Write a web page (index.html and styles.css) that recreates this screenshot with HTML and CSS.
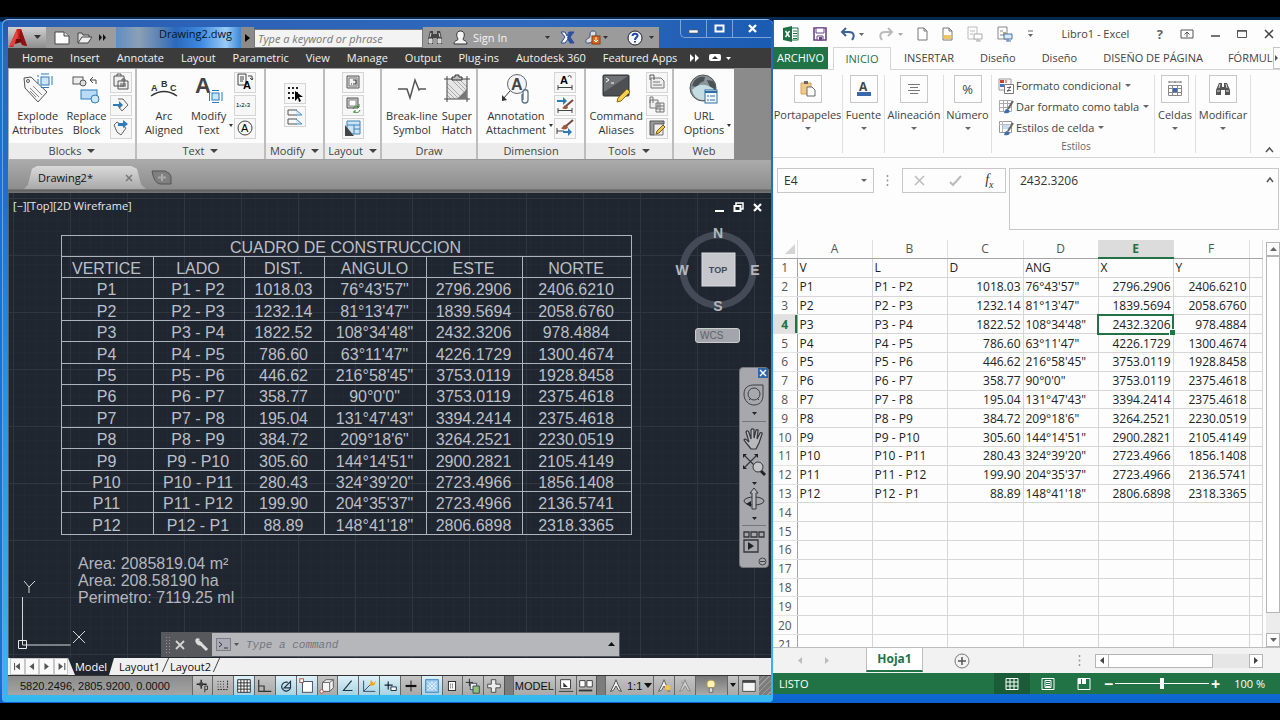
FILE: index.html
```html
<!DOCTYPE html>
<html lang="es">
<head>
<meta charset="utf-8">
<title>Drawing2.dwg / Libro1 - Excel</title>
<link rel="stylesheet" href="styles.css">
</head>
<body>
<div class="desktop">

<section class="cad" aria-label="Drawing2.dwg">
  <header class="cad-title">
    <button class="app-btn" aria-label="Application menu">
      <svg width="19" height="20" viewBox="0 0 19 20"><path d="M0 19 8 1h4l6 17-5-1-2-4-5 2-2 4z" fill="#c3211c"/><path d="M8 1 0 19l5-2 4-9z" fill="#e2443a"/><path d="M12 1l6 17-5-1-3-9z" fill="#8d1411"/><path d="M7 11h5l1 3-7 2z" fill="#6b0d0b"/></svg>
      <svg width="8" height="5" viewBox="0 0 8 5"><path d="M0 0h7L3.500 4z" fill="#333"/></svg>
    </button>
    <div class="qat">
      <button aria-label="New"><svg width="18" height="16" viewBox="0 0 18 16"><path d="M2 2h9l5 4v8H2z" fill="#fff" stroke="#444"/><path d="M11 2v4h5" fill="#ddd" stroke="#444"/></svg></button>
      <button aria-label="Open"><svg width="18" height="16" viewBox="0 0 18 16"><path d="M2 13V3h4l1 2h6v3" fill="#ddd" stroke="#444"/><path d="M2 13l4-6h10l-4 6z" fill="#eee" stroke="#444"/></svg></button>
      <button aria-label="More"><svg width="8" height="7" viewBox="0 0 8 7"><path d="M0 0l3 3.500L0 7zM4 0l3 3.500L4 7z" fill="#111"/></svg></button>
    </div>
    <h1 class="cad-name">Drawing2.dwg</h1>
    <button class="name-arrow" aria-label="Expand"><svg width="5" height="8" viewBox="0 0 5 8"><path d="M0 0l5 4-5 4z" fill="#000"/></svg></button>
    <input class="cad-search" type="text" placeholder="Type a keyword or phrase" aria-label="Search">
    <div class="info">
      <button aria-label="Find"><svg width="16" height="15" viewBox="0 0 16 15"><path d="M3 1h3v3h4V1h3l2 8v5h-5V8H6v6H1V9z" fill="#444"/><path d="M2 9h3v4H2zM11 9h3v4h-3zM4 3l-1 4M12 3l1 4" fill="#ccc" stroke="#ddd"/></svg></button>
      <button class="sign"><svg width="15" height="15" viewBox="0 0 15 15"><path d="M5 9C3 6 3 1 7.500 1S12 6 10 9c0 2 4 1 4 5H1c0-4 4-3 4-5z" fill="#f4f4f4" stroke="#333"/></svg><span>Sign In</span></button>
      <svg class="push" width="5" height="3" viewBox="0 0 5 3"><path d="M0 0h5L2.500 3z" fill="#333"/></svg>
      <button aria-label="Exchange"><svg width="15" height="13" viewBox="0 0 15 13"><path d="M1 1h4l2 4 2-4h5l-4 5 4 6h-4l-2-4-3 4H1l4-6z" fill="#fff" stroke="#274a97"/><path d="M9 1h5l-4 5 4 6h-4L7 7z" fill="#2c4f9e"/></svg></button>
      <button aria-label="Stay connected"><svg width="24" height="15" viewBox="0 0 24 15"><path d="M1 12C0 8 5 9 5 6S5 1 8 1s4 2 2 5-3 7-6 7-3 0-3-1z" fill="#ddd" stroke="#365488"/><rect x="7" y="6" width="8" height="8" fill="#d96a1d" stroke="#8c3d06"/><path d="M11 7v5M9 10l2 2 2-2" stroke="#fff" fill="none"/><path d="M18 6h5l-2.500 3z" fill="#333"/></svg></button>
      <button class="help" aria-label="Help"><svg width="28" height="16" viewBox="0 0 28 16"><circle cx="8" cy="8" r="7" fill="#f5f7ff" stroke="#222"/><path d="M5.500 6c0-3 5-3 5-.3C10.500 7.500 8 7.500 8 10m0 1v1.500" fill="none" stroke="#2344a0" stroke-width="2"/><path d="M22 6h5l-2.500 3z" fill="#333"/></svg></button>
    </div>
    <div class="win-ctl">
      <button aria-label="Minimize"><svg width="12" height="12" viewBox="0 0 12 12"><path d="M1 7h9v3H1z" fill="#fff" stroke="#555" stroke-width=".6"/></svg></button>
      <button aria-label="Maximize"><svg width="12" height="10" viewBox="0 0 12 10"><path d="M1.500 1.500h8v6h-8z" fill="none" stroke="#fff" stroke-width="2"/></svg></button>
      <button aria-label="Close"><svg width="11" height="9" viewBox="0 0 11 9"><path d="M2 1l7 7M9 1L2 8" stroke="#fff" stroke-width="2.400"/></svg></button>
    </div>
  </header>

  <nav class="cad-menu">
    <button>Home</button><button>Insert</button><button>Annotate</button><button>Layout</button><button>Parametric</button><button>View</button><button>Manage</button><button>Output</button><button>Plug-ins</button><button>Autodesk 360</button><button>Featured Apps</button>
    <svg width="42" height="10" viewBox="0 0 42 10"><path d="M1 1l4 4-4 4zM6 1l4 4-4 4z" fill="#fff"/><rect x="20" y="1" width="12" height="7" rx="2" fill="#fff"/><path d="M23 6l3-3 3 3z" fill="#333"/><path d="M37 4h5l-2.500 3z" fill="#fff"/></svg>
  </nav>

  <div class="ribbon">
    <div class="panel w-blocks"><div class="tools">
      <button class="big"><svg width="32" height="30" viewBox="0 0 32 30"><path d="M2 4l7-1 16 15-9 10L3 14z" fill="#f7f7f7" stroke="#555"/><circle cx="6" cy="7" r="1.500" fill="none" stroke="#555"/><path d="M8 14l9 9M11 12l9 9M8 17l6 6" stroke="#888"/><rect x="19" y="3" width="8" height="8" fill="#cde4f7" stroke="#2f7ab8"/><path d="M16 1v2M16 5v5M30 2v9M19 0h8M19 13.500h8" stroke="#2f7ab8" fill="none"/></svg><span>Explode<br>Attributes</span></button>
      <button class="big"><svg width="30" height="30" viewBox="0 0 30 30"><rect x="2" y="3" width="10" height="7" fill="#eee" stroke="#555"/><circle cx="12" cy="9" r="3" fill="#ddd" stroke="#555"/><path d="M25 10V6h-6m3-3l-3 3 3 3" fill="none" stroke="#444"/><rect x="10" y="16" width="16" height="9" fill="#b9dbf5" stroke="#2f7ab8"/><circle cx="24" cy="25" r="4" fill="#cde6f8" stroke="#2f7ab8"/></svg><span>Replace<br>Block</span></button>
      <div class="smalls">
        <button aria-label="Paste"><svg viewBox="0 0 18 18"><path d="M2 3h10v10H2zM5 3V1h4v2M6 8h10v8H6zM8 11h6M8 13h6M10 8v-2h3v2" fill="#eee" stroke="#555"/></svg></button>
        <button aria-label="Export"><svg viewBox="0 0 18 18"><path d="M6 3h5l5 6-6 6-4-5" fill="#f3f3f3" stroke="#666"/><path d="M1 8h6V5l4 4-4 4v-3H1z" fill="#2f7ab8"/></svg></button>
        <button aria-label="Import"><svg viewBox="0 0 18 18"><path d="M2 6l3-3 9 6-5 7-4-3z" fill="#f3f3f3" stroke="#666"/><path d="M6 4h5V1l5 4-5 4V7H6z" fill="#2f7ab8"/></svg></button>
      </div></div><button class="cap">Blocks <i></i></button></div>
    <div class="panel w-text"><div class="tools">
      <button class="big"><svg width="30" height="30" viewBox="0 0 30 30"><text x="2" y="17" class="g9">A</text><text x="12" y="13" class="g9">B</text><text x="21" y="17" class="g9">C</text><path d="M2 22q13-9 26 0" fill="none" stroke="#333" stroke-width="1.500"/></svg><span>Arc<br>Aligned</span></button>
      <button class="big drop"><svg width="30" height="30" viewBox="0 0 30 30"><text x="1" y="19" class="g22">A</text><rect x="18" y="19" width="7" height="7" fill="#cde4f7" stroke="#2f7ab8"/><path d="M15.500 18v9M28 18v9M18 16.500h7M18 28.500h7" stroke="#2f7ab8"/></svg><span>Modify<br>Text</span></button>
      <div class="smalls">
        <button aria-label="Convert text"><svg viewBox="0 0 18 18"><path d="M2 1h8v11H2zM4 4h4M4 6h4M4 8h3M12 3h4v4m-2-2l2 2 1-2" fill="none" stroke="#444"/><text x="7" y="16" class="g11 bold">A</text></svg></button>
        <button aria-label="Numbering"><svg viewBox="0 0 18 18"><text x="0" y="11" class="g6">1›2›3</text></svg></button>
        <button aria-label="Enclose text"><svg viewBox="0 0 18 18"><circle cx="9" cy="9" r="7" fill="none" stroke="#444"/><text x="5" y="13" class="g11">A</text></svg></button>
      </div></div><button class="cap">Text <i></i></button></div>
    <div class="panel w-modify"><div class="tools">
      <div class="smalls">
        <button aria-label="Select"><svg viewBox="0 0 18 18"><path d="M2 3h12M2 8h12M2 13h7" stroke="#222" stroke-width="2" stroke-dasharray="2 2"/><path d="M9 6v10l3-3 1 4 2-1-2-4h4z" fill="#000"/></svg></button>
        <button aria-label="Clip"><svg viewBox="0 0 18 18"><path d="M11 2H2v5h9M11 11H2v5h9" fill="none" stroke="#555"/><path d="M10 2l6 5h-6M10 11l6 5h-6" fill="#d8eafa" stroke="#4a8dc8"/></svg></button>
      </div></div><button class="cap">Modify <i></i></button></div>
    <div class="panel w-layout"><div class="tools">
      <div class="smalls">
        <button aria-label="Align space"><svg viewBox="0 0 18 18"><path d="M3 3h12v12H3z" fill="#ddd" stroke="#555"/><path d="M5 5h8v8H5z" fill="#f2f2f2" stroke="#777"/><path d="M7 11h1M9 11h3V7H9" fill="none" stroke="#333"/></svg></button>
        <button aria-label="Synchronize viewports"><svg viewBox="0 0 18 18"><path d="M3 2h11v10H3z" fill="#ccc" stroke="#555"/><path d="M5 4h7v6H5z" fill="#fff" stroke="#888"/><path d="M9 13c1-3 4-3 6-2m1 3c-1 3-4 3-6 2M15 8v3h-2M10 17v-2h2" fill="none" stroke="#35862c"/></svg></button>
        <button aria-label="Merge layouts"><svg viewBox="0 0 18 18"><path d="M3 2h13v13H3z" fill="#cde4f7" stroke="#3e82b9"/><path d="M3 6h13M10 6v9M10 10h6" stroke="#3e82b9"/><path d="M1 6v11h9z" fill="#444"/></svg></button>
      </div></div><button class="cap">Layout <i></i></button></div>
    <div class="panel w-draw"><div class="tools">
      <button class="big"><svg width="30" height="30" viewBox="0 0 30 30"><path d="M1 15h9l3 9 5-18 4 10 1-1h6" fill="none" stroke="#555" stroke-width="1.500"/></svg><span>Break-line<br>Symbol</span></button>
      <button class="big"><svg width="30" height="30" viewBox="0 0 30 30"><rect x="5" y="5" width="20" height="20" fill="#e6e6e6"/><path d="M5 9l16 16M5 13l12 12M5 17l8 8M9 5l16 16M13 5l12 12M17 5l8 8M5 21l4 4" stroke="#999" stroke-width=".8"/><path d="M2 5h26M2 25h26M5 2v26M25 2v26" stroke="#444"/><path d="M25 15v10H15z" fill="#777"/><path d="M10 6V3h3V1h4v2h3v3z" fill="#bbb" stroke="#333"/></svg><span>Super<br>Hatch</span></button>
      </div><div class="cap">Draw</div></div>
    <div class="panel w-dim"><div class="tools">
      <button class="big drop"><svg width="32" height="30" viewBox="0 0 32 30"><circle cx="17" cy="10" r="9.500" fill="#f1f5f9" stroke="#666"/><text x="11" y="16" class="g16">A</text><path d="M10 17L3 25" stroke="#333"/><path d="M2 27v-6l5 5z" fill="#333"/><path d="M23 26v-8c0-3 5-3 5 0v8c0 4-6 4-6 0v-6" fill="none" stroke="#5c7489" stroke-width="1.300"/></svg><span>Annotation<br>Attachment</span></button>
      <div class="smalls">
        <button aria-label="Reset text"><svg viewBox="0 0 18 18"><text x="4" y="11" class="g11 bold">A</text><path d="M2 12v5M16 12v5M2 14.500h14M12 4c0-2 4-2 3 1" fill="none" stroke="#444"/></svg></button>
        <button aria-label="Apply style"><svg viewBox="0 0 18 18"><path d="M1 4h6V1l4 4-4 4V6H1z" fill="#2f7ab8"/><path d="M17 4l-7 6" stroke="#744" stroke-width="2"/><path d="M6 12c2 0 1-3 4-3l2 2c0 3-5 2-6 1z" fill="#9b5a3e"/><path d="M2 12v5M16 12v5M2 14.500h14" stroke="#444"/></svg></button>
        <button aria-label="Match style"><svg viewBox="0 0 18 18"><path d="M17 1l-7 6" stroke="#744" stroke-width="2"/><path d="M5 9c2 0 2-4 5-3l2 2c0 3-6 3-7 1z" fill="#9b5a3e"/><path d="M1 9v6M1 12h7" stroke="#444"/><path d="M7 12h5v-3l4 4-4 4v-3H7z" fill="#2f7ab8"/></svg></button>
      </div></div><div class="cap">Dimension</div></div>
    <div class="panel w-tools"><div class="tools">
      <button class="big"><svg width="32" height="30" viewBox="0 0 32 30"><rect x="3" y="1" width="26" height="21" rx="1" fill="#4d4f52" stroke="#333"/><path d="M4 2h24L4 18z" fill="#707376"/><path d="M6 4l3 2-3 2M11 9h3" fill="none" stroke="#fff"/><path d="M17 28l1-4 9-9 3 3-9 9z" fill="#f5d04e" stroke="#8e6c16"/></svg><span>Command<br>Aliases</span></button>
      <div class="smalls">
        <button aria-label="Import aliases"><svg viewBox="0 0 18 18"><path d="M3 5h10l3 3v7H3zM5 9h7M5 12h9" fill="#eee" stroke="#777"/><path d="M2 7V2h4v5" fill="none" stroke="#555"/></svg></button>
        <button aria-label="Export aliases"><svg viewBox="0 0 18 18"><path d="M2 4h8v8H2zM2 7V1h3v6M8 7h8v9H8zM8 10h8M12 7v9M8 13h8" fill="#eee" stroke="#777"/></svg></button>
        <button aria-label="Edit file"><svg viewBox="0 0 18 18"><path d="M2 2h14v3H6v11H2z" fill="#999" stroke="#555"/><path d="M6 5h9v11H6z" fill="#eee" stroke="#777"/><path d="M8 15l1-3 6-6 2 2-6 6z" fill="#f0c84a" stroke="#7c6018"/></svg></button>
      </div></div><button class="cap">Tools <i></i></button></div>
    <div class="panel w-web"><div class="tools">
      <button class="big drop"><svg width="30" height="30" viewBox="0 0 30 30"><circle cx="14" cy="14" r="13" fill="#8b9499" stroke="#555"/><path d="M5 7c3-4 8-5 11-4l-1 4-4 2-3 4-5-1zM18 6l6 1c3 4 3 7 2 9l-5-3z" fill="#4a5256"/><path d="M3 16q9-10 22-1-3 12-12 11-8-1-10-10z" fill="#c3dde3"/><rect x="16" y="16" width="12" height="13" fill="#eef6fd" stroke="#2f6ea3"/><path d="M16 18h12" stroke="#2f6ea3" stroke-width="2"/><path d="M18 22h2M21 22h5M18 26h2M21 26h5" stroke="#2f6ea3"/></svg><span>URL<br>Options</span></button>
      </div><div class="cap">Web</div></div>
  </div>

  <div class="doc-tabs">
    <button class="doc-tab"><span>Drawing2*</span><svg width="8" height="8" viewBox="0 0 8 8"><path d="M1 1l6 6M7 1L1 7" stroke="#777" stroke-width="1.500"/></svg></button>
    <button class="doc-new" aria-label="New drawing"><svg width="22" height="15" viewBox="0 0 22 15"><path d="M1 1h13q6 2 6 6v7H9Q3 13 1 1z" fill="#808080" stroke="#555"/><path d="M11 4v7M7 7.500h8" stroke="#aaa" stroke-width="2"/></svg></button>
  </div>

  <main class="canvas">
    <div class="view-label">[−][Top][2D Wireframe]</div>
    <div class="mdi">
      <button aria-label="Minimize drawing"><svg width="11" height="11" viewBox="0 0 11 11"><path d="M1 8h9v2H1z" fill="#fff"/></svg></button>
      <button aria-label="Restore drawing"><svg width="11" height="11" viewBox="0 0 11 11"><path d="M3 3V1h7v6H8" fill="none" stroke="#fff" stroke-width="1.500"/><path d="M1.500 4h6v5h-6z" fill="none" stroke="#fff" stroke-width="2"/></svg></button>
      <button aria-label="Close drawing"><svg width="11" height="11" viewBox="0 0 11 11"><path d="M2 2l7 7M9 2L2 9" stroke="#fff" stroke-width="2.200"/></svg></button>
    </div>
    <table class="survey">
      <colgroup><col class="c1"><col class="c2"><col class="c3"><col class="c4"><col class="c5"><col class="c6"></colgroup>
      <thead>
        <tr><th colspan="6">CUADRO DE CONSTRUCCION</th></tr>
        <tr><th>VERTICE</th><th>LADO</th><th>DIST.</th><th>ANGULO</th><th>ESTE</th><th>NORTE</th></tr>
      </thead>
      <tbody id="survey"></tbody>
    </table>
    <div class="summary">Area: 2085819.04 m²<br>Area: 208.58190 ha<br>Perimetro: 7119.25 ml</div>
    <svg class="cube" width="90" height="90" viewBox="0 0 90 90"><circle cx="45" cy="45" r="35" fill="none" stroke="#454a57" stroke-width="7"/><rect x="29" y="28" width="33" height="33" fill="#c6c7cc" stroke="#dadbe0"/><text x="45" y="48" class="top">TOP</text><text x="45" y="13" class="dir">N</text><text x="45" y="86" class="dir">S</text><text x="9" y="50" class="dir">W</text><text x="82" y="50" class="dir">E</text></svg>
    <button class="wcs">WCS</button>
    <div class="navbar">
      <button class="nav-x" aria-label="Close navigation bar"><svg width="10" height="10" viewBox="0 0 10 10"><rect width="10" height="10" fill="#2d67a8"/><path d="M2 2l6 6M8 2L2 8" stroke="#fff" stroke-width="1.300"/></svg></button>
      <button aria-label="Steering wheel"><svg width="26" height="37" viewBox="0 0 26 37"><path d="M3 12C3 5 8 3 13 3h9v10c0 7-4 10-9 10S3 19 3 12z" fill="none" stroke="#3c3f45"/><circle cx="13" cy="12" r="6" fill="none" stroke="#3c3f45"/><path d="M8 18l2-2M18 18l-2-2" stroke="#3c3f45"/><path d="M11 30h5l-2.500 3z" fill="#222"/></svg></button>
      <hr>
      <button aria-label="Pan"><svg width="26" height="26" viewBox="0 0 26 26"><path d="M10 23c-2-3-5-6-7-9 1-2 3 0 5 2L5 6c1-2 3-1 3 1l2 6V4c1-2 3-1 3 0v8l2-8c1-1 3 0 2 1l-1 8 3-6c1-1 3 0 2 1l-3 9-3 6z" fill="#b7b9bd" stroke="#33363b" stroke-width="1.200"/></svg></button>
      <button aria-label="Zoom extents"><svg width="26" height="34" viewBox="0 0 26 34"><path d="M4 4l12 12M16 3L4 15" stroke="#33363b" stroke-width="1.200"/><path d="M2 2h4L2 6zM13 2h4v4zM2 13v4h4z" fill="#222"/><circle cx="17" cy="15" r="5" fill="#c3c5c9" stroke="#33363b"/><path d="M20 19l4 4" stroke="#222" stroke-width="3"/><path d="M11 30h5l-2.500 3z" fill="#222"/></svg></button>
      <button aria-label="Orbit"><svg width="26" height="37" viewBox="0 0 26 37"><ellipse cx="13" cy="15" rx="10" ry="4" fill="none" stroke="#33363b"/><path d="M11 23V7H9l4-5 4 5h-2v16z" fill="#b7b9bd" stroke="#33363b"/><path d="M5 18l5-3v6z" fill="#222"/><path d="M11 31h5l-2.500 3z" fill="#222"/></svg></button>
      <hr>
      <button aria-label="ShowMotion"><svg width="26" height="24" viewBox="0 0 26 24"><path d="M3 2h5v5H3zM10 2h6v5h-6zM18 2h5v5h-5zM3 10h14v12H3z" fill="none" stroke="#33363b" stroke-width="1.300"/><path d="M7 12l6 4-6 4z" fill="#222"/></svg></button>
      <svg class="nav-min" width="9" height="9" viewBox="0 0 9 9"><circle cx="4.500" cy="4.500" r="3.500" fill="none" stroke="#444"/><path d="M2 4.500h5" stroke="#444"/></svg>
    </div>
    <svg class="ucs" width="70" height="72" viewBox="0 0 70 72"><path d="M4.500 17v48h48" fill="none" stroke="#d4d6da"/><path d="M.5 60.500h8v8h-8z" fill="none" stroke="#e8e8ea"/><path d="M6 1l5 6 6-6M11 7v6M55 51l12 12M67 51L55 63" fill="none" stroke="#d4d6da"/></svg>
    <div class="cmd">
      <div class="cmd-grip"><svg width="50" height="24" viewBox="0 0 50 24"><path d="M4.500 4v17M7.500 4v17" stroke="#999" stroke-dasharray="1 2"/><path d="M14 8l8 8M22 8l-8 8" stroke="#d5d5d5" stroke-width="1.800"/><path d="M36 8l9 9" stroke="#ddd" stroke-width="3"/><path d="M34 10c-2-4 1-6 4-4l-2 2 1 2 3-1c1 4-3 5-6 1z" fill="#ddd"/></svg></div>
      <svg width="26" height="14" viewBox="0 0 26 14"><rect x=".5" y=".5" width="14" height="12" fill="#a9acb5" stroke="#7b7e86"/><path d="M3 4l3 2.500L3 9M8 10h4" fill="none" stroke="#333"/><path d="M18 5h5l-2.500 3z" fill="#555"/></svg>
      <input type="text" placeholder="Type a command" aria-label="Command line">
      <svg width="8" height="5" viewBox="0 0 8 5"><path d="M0 4h7L3.500 0z" fill="#111"/></svg>
    </div>
  </main>

  <div class="layout-tabs">
    <div class="steps"><button aria-label="First"><svg viewBox="0 0 14 14"><path d="M4 3v8" stroke="#333"/><path d="M10 3v8L5 7z" fill="#555"/></svg></button><button aria-label="Previous"><svg viewBox="0 0 14 14"><path d="M9 3v8L4 7z" fill="#555"/></svg></button><button aria-label="Next"><svg viewBox="0 0 14 14"><path d="M5 3v8l5-4z" fill="#555"/></svg></button><button aria-label="Last"><svg viewBox="0 0 14 14"><path d="M4 3v8l5-4z" fill="#555"/><path d="M11 3v8" stroke="#333"/></svg></button></div>
    <button class="model on">Model</button><button class="lay">Layout1</button><button class="lay">Layout2</button>
  </div>

  <footer class="cad-status">
    <output>5820.2496, 2805.9200, 0.0000</output>
    <button aria-label="Infer constraints"><svg viewBox="0 0 20 20"><path d="M8 3v10M3 8h11" stroke="#222" stroke-width="1.500"/><path d="M6 6h4v4H6z" fill="#444"/><path d="M12 17V10h3v4h-3" fill="none" stroke="#333"/></svg></button>
    <button aria-label="Snap"><svg viewBox="0 0 20 20"><path d="M4 5h9M4 8h9M4 11h9" stroke="#222" stroke-dasharray="1 2"/><path d="M4 14h11M15 4v8" stroke="#222" stroke-dasharray="2 1"/></svg></button>
    <button class="lit" aria-label="Grid"><svg viewBox="0 0 20 20"><path d="M3 3h14v14H3zM3 6.500h14M3 10h14M3 13.500h14M6.500 3v14M10 3v14M13.500 3v14" fill="#fff" stroke="#222"/></svg></button>
    <button aria-label="Ortho"><svg viewBox="0 0 20 20"><path d="M3 3v13h14M3 10h6v6" fill="none" stroke="#333" stroke-width="1.300"/></svg></button>
    <button class="lit" aria-label="Polar"><svg viewBox="0 0 20 20"><path d="M12 6a5 5 0 1 0 3 6H8l7-7v7" fill="none" stroke="#234" stroke-width="1.300"/></svg></button>
    <button class="lit" aria-label="Object snap"><svg viewBox="0 0 20 20"><rect x="5" y="5" width="11" height="12" fill="#fff" stroke="#445"/><rect x="2" y="2" width="4" height="4" fill="#fff" stroke="#b43"/></svg></button>
    <button aria-label="3D object snap"><svg viewBox="0 0 20 20"><path d="M5 6l4-3h8v9l-4 4H5zM5 6h8v10M13 6l4-3" fill="#f5f5f5" stroke="#555"/><circle cx="4" cy="16" r="2" fill="#fff" stroke="#b43"/></svg></button>
    <button class="lit" aria-label="Tracking"><svg viewBox="0 0 20 20"><path d="M14 4L5 15h10" fill="none" stroke="#234" stroke-width="1.300"/></svg></button>
    <button class="lit" aria-label="Dynamic UCS"><svg viewBox="0 0 20 20"><path d="M4 4v12h13M4 16l9-9" fill="none" stroke="#346"/><path d="M12 3l3 4 3-3-2 5-5 1z" fill="#f1a51c"/></svg></button>
    <button class="lit" aria-label="Dynamic input"><svg viewBox="0 0 20 20"><path d="M4 9h9M8 5v9" stroke="#123" stroke-width="1.300"/><path d="M11 11h6v4h-6z" fill="#fff" stroke="#123"/></svg></button>
    <button aria-label="Lineweight"><svg viewBox="0 0 20 20"><path d="M4 10h12" stroke="#111" stroke-width="2.400"/><path d="M10 4v12" stroke="#111"/></svg></button>
    <button class="lit" aria-label="Transparency"><svg viewBox="0 0 20 20"><rect x="3" y="3" width="14" height="14" fill="#9cc9ee" stroke="#3e7fb8"/><path d="M5 5l10 10M9 5l6 6M13 5l2 2M5 9l6 6M5 13l2 2M15 5L5 15M15 9l-6 6M11 5l-6 6" stroke="#eaf5ff"/></svg></button>
    <button aria-label="Quick properties"><svg viewBox="0 0 20 20"><rect x="6" y="5" width="8" height="10" fill="#fff" stroke="#222"/><path d="M8 8h4M8 10h4M8 12h4" stroke="#222" stroke-dasharray="1 1"/></svg></button>
    <button aria-label="Selection cycling"><svg viewBox="0 0 20 20"><path d="M6 2v8M2 6h8" stroke="#222"/><path d="M7 7h7v7H7z" fill="#eee" stroke="#345"/><path d="M10 10h7v8h-7z" fill="#8fc078" stroke="#345"/></svg></button>
    <button aria-label="Annotation monitor"><svg viewBox="0 0 20 20"><path d="M7 3h5v5h5v4h-5v5H7v-5H3V8h4z" fill="#eee" stroke="#444"/></svg></button>
    <span class="sep"></span>
    <button class="txt">MODEL</button>
    <button aria-label="Quick view layouts"><svg viewBox="0 0 20 20"><path d="M4 3h11v10H4zM2 16h16" fill="#fff" stroke="#333"/><path d="M7 6v5h5z" fill="#333"/></svg></button>
    <button aria-label="Quick view drawings"><svg viewBox="0 0 20 20"><path d="M3 4h6v7H3zM11 4h6v7h-6z" fill="#fff" stroke="#333"/><path d="M2 15h15" stroke="#333" stroke-width="2"/></svg></button>
    <span class="sep"></span>
    <button class="scale"><svg viewBox="0 0 20 20"><path d="M10 3l-2 5-4 8 3-1 3-5 3 5 3 1-4-8z" fill="#f3f3f3" stroke="#444"/></svg><span>1:1</span><svg class="tri" viewBox="0 0 8 5"><path d="M0 0h8L4 5z" fill="#111"/></svg></button>
    <button aria-label="Annotation visibility"><svg viewBox="0 0 20 20"><path d="M10 3l-2 5-4 8 3-1 3-5 3 5 3 1-4-8z" fill="#f3f3f3" stroke="#555"/><circle cx="14" cy="12" r="3" fill="#f3c64a"/></svg></button>
    <button aria-label="Auto scale"><svg viewBox="0 0 20 20"><path d="M10 3l-2 5-4 8 3-1 3-5 3 5 3 1-4-8z" fill="#ccc" stroke="#888"/><path d="M5 3l2 3 2-3-2 6z" fill="#999"/></svg></button>
    <button class="bulb" aria-label="Isolate objects"><svg viewBox="0 0 20 20"><circle cx="10" cy="8" r="4.500" fill="#fdf3b4" stroke="#b99a3c"/><path d="M8 12h4v5H8z" fill="#ddd" stroke="#666"/></svg></button>
    <button class="thin" aria-label="Status menu"><svg class="tri" viewBox="0 0 8 5"><path d="M1 0h6L4 4z" fill="#111"/></svg></button>
    <button aria-label="Clean screen"><svg viewBox="0 0 20 20"><path d="M3 4h14v12H3z" fill="#f5f5f5" stroke="#444"/><path d="M3 5h14" stroke="#444" stroke-width="3"/></svg></button>
    <span class="grip"></span>
  </footer>
</section>

<section class="xl" aria-label="Libro1 - Excel">
  <header class="xl-title">
    <svg width="16" height="16" viewBox="0 0 16 16"><path d="M8 2h7v12H8z" fill="#fff" stroke="#1e7145"/><path d="M10 5h4M10 7.500h4M10 10h4M10 12.500h4" stroke="#1e7145"/><path d="M0 2l9-2v16l-9-2z" fill="#1e7145"/><path d="M2.500 5l4 6M6.500 5l-4 6" stroke="#fff" stroke-width="1.400"/></svg>
    <button aria-label="Guardar"><svg width="14" height="14" viewBox="0 0 14 14"><path d="M1 1h12v12H1z" fill="#fff" stroke="#6b4488" stroke-width="1.600"/><path d="M3 1h8v5H3zM4 9h6v4H4z" fill="#fff" stroke="#6b4488"/><path d="M6 10h3v3H6z" fill="#6b4488"/></svg></button>
    <button aria-label="Deshacer"><svg width="24" height="14" viewBox="0 0 24 14"><path d="M5 1L1 5l4 4M1 5h7c5 0 6 4 3 8" fill="none" stroke="#3f6299" stroke-width="2"/><path d="M18 6h5l-2.500 3z" fill="#666"/></svg></button>
    <button aria-label="Rehacer"><svg width="24" height="14" viewBox="0 0 24 14"><path d="M9 1l4 4-4 4M13 5H6C1 5 0 9 3 13" fill="none" stroke="#bbb" stroke-width="2"/><path d="M19 6h5l-2.500 3z" fill="#aaa"/></svg></button>
    <button aria-label="Nuevo"><svg width="11" height="14" viewBox="0 0 11 14"><path d="M1 1h6l3 3v9H1zM7 1v3h3" fill="#fff" stroke="#777"/></svg></button>
    <button aria-label="Abrir"><svg width="11" height="14" viewBox="0 0 11 14"><path d="M1 1h6l3 3v9H1zM7 1v3h3" fill="#fff" stroke="#777"/><path d="M2 8h7v4H2z" fill="#ecc663"/></svg></button>
    <button aria-label="Vista"><svg width="16" height="16" viewBox="0 0 16 16"><path d="M1 1h9v12H1zM3 5h5M3 8h3" fill="none" stroke="#bbb"/><path d="M7 8h8v5H7zM11 13v2M9 15h5" fill="#fff" stroke="#aaa"/></svg></button>
    <button aria-label="Impresión"><svg width="16" height="16" viewBox="0 0 16 16"><path d="M1 1h9v12H1zM3 5h3M3 9h3" fill="none" stroke="#888"/><path d="M6 6h3v4H6z" fill="#e5a04c"/><path d="M7 8h8v5H7zM11 13v2M9 15h5" fill="#dcebf7" stroke="#4471a8"/></svg></button>
    <svg width="7" height="8" viewBox="0 0 7 8"><path d="M1 1h5" stroke="#666"/><path d="M1 4h5L3.500 7z" fill="#666"/></svg>
    <h2>Libro1 - Excel</h2>
    <div class="xl-ctl">
    <button class="q" aria-label="Ayuda">?</button>
    <button aria-label="Opciones de cinta"><svg width="14" height="12" viewBox="0 0 14 12"><path d="M1 2h12v8H1z" fill="none" stroke="#555"/><path d="M7 9V4M4.500 6.500L7 4l2.500 2.500" fill="none" stroke="#555"/></svg></button>
    <button aria-label="Minimizar"><svg width="9" height="12" viewBox="0 0 9 12"><path d="M0 8h9" stroke="#444" stroke-width="1.500"/></svg></button>
    <button aria-label="Maximizar"><svg width="10" height="12" viewBox="0 0 10 12"><path d="M.5 2.500h9v7h-9z" fill="none" stroke="#555"/><path d="M0 3h10" stroke="#555" stroke-width="1.500"/></svg></button>
    <button aria-label="Cerrar"><svg width="10" height="12" viewBox="0 0 10 12"><path d="M1 2l8 8M9 2l-8 8" stroke="#444" stroke-width="1.500"/></svg></button>
    </div>
  </header>
  <nav class="xl-tabs">
    <button class="file">ARCHIVO</button><button class="on">INICIO</button><button>INSERTAR</button><button>Diseño</button><button>Diseño</button><button>DISEÑO DE PÁGINA</button><button class="last">FÓRMUL</button>
    <button class="more" aria-label="Más fichas"><svg width="4" height="6" viewBox="0 0 4 6"><path d="M0 0l3 3-3 3z" fill="#555"/></svg></button>
  </nav>
  <div class="xl-ribbon">
    <button class="grp g1"><b><svg width="18" height="18" viewBox="0 0 18 18"><path d="M2 3h10v11H2z" fill="#f0c98c" stroke="#d6a35c"/><path d="M5 1h4v3H5z" fill="#666"/><path d="M8 7h5l3 3v6H8z" fill="#fff" stroke="#666"/></svg></b><span>Portapapeles</span><i></i></button>
    <button class="grp g2"><b><svg width="18" height="18" viewBox="0 0 18 18"><text x="4" y="11" class="xa">A</text><path d="M2 12h14v4H2z" fill="#3b67ad"/></svg></b><span>Fuente</span><i></i></button>
    <button class="grp g3"><b><svg width="18" height="18" viewBox="0 0 18 18"><path d="M3 4.500h12M5 7.500h8M3 10.500h12M5 13.500h8" stroke="#777"/></svg></b><span>Alineación</span><i></i></button>
    <button class="grp g4"><b class="pct">%</b><span>Número</span><i></i></button>
    <div class="grp g5">
      <button><svg width="16" height="16" viewBox="0 0 16 16"><path d="M1 1h12v11H1z" fill="#fff" stroke="#999"/><path d="M2 2h4v3H2z" fill="#c8403c"/><path d="M2 6h4v3H2z" fill="#4a74b4"/><path d="M7 2h2v3H7z" fill="#d98"/><path d="M6.500 6.500h9v9h-9z" fill="#fff" stroke="#777"/><path d="M9 9.500h4M9 12.500h4M12.500 8l-3 6" stroke="#444" stroke-width=".8"/></svg><span>Formato condicional</span><i></i></button>
      <button><svg width="16" height="16" viewBox="0 0 16 16"><path d="M1.500 1.500h12v11h-12zM1.500 4.500h12M1.500 8.500h12M5.500 1.500v11M9.500 1.500v11" fill="#fff" stroke="#aaa"/><path d="M15 2l-5 8" stroke="#666" stroke-width="2"/><path d="M6 14c1-4 3-5 5-3s-1 4-5 3z" fill="#3e6fae"/></svg><span>Dar formato como tabla</span><i></i></button>
      <button><svg width="16" height="16" viewBox="0 0 16 16"><path d="M1.500 1.500h12v11h-12z" fill="#fff" stroke="#999"/><path d="M4 5h7v4H4z" fill="#c9daef"/><path d="M1 4.500h12M4.500 1v11" stroke="#bbb"/><path d="M15 3l-5 8" stroke="#666" stroke-width="2"/><path d="M6 15c1-4 3-5 5-3s-1 4-5 3z" fill="#3e6fae"/></svg><span>Estilos de celda</span><i></i></button>
      <small>Estilos</small>
    </div>
    <button class="grp g6w"><b><svg width="18" height="18" viewBox="0 0 18 18"><path d="M3 2h12M3 1v2M15 1v2M9 1v2" stroke="#777"/><path d="M2.500 5.500h13v10h-13zM2.500 8.500h13M2.500 12.500h13M6.500 5.500v10M11.500 5.500v10" fill="#fff" stroke="#888"/><path d="M7 8h4v4H7z" fill="#3b67ad"/></svg></b><span>Celdas</span><i></i></button>
    <button class="grp g7"><b><svg width="18" height="18" viewBox="0 0 18 18"><path d="M5 3h3v4h2V3h3l3 7v5h-5v-5H7v5H2v-5z" fill="#555"/><path d="M3 11h3M12 11h3M6 4l-1 4M12 4l1 4" stroke="#ddd"/></svg></b><span>Modificar</span><i></i></button>
    <button class="fold" aria-label="Contraer cinta"><svg width="9" height="6" viewBox="0 0 9 6"><path d="M1 5l3.500-4L8 5" fill="none" stroke="#555" stroke-width="1.500"/></svg></button>
  </div>
  <div class="fbar">
    <div class="namebox"><input type="text" value="E4" aria-label="Cuadro de nombres"><i></i></div>
    <svg class="dots" width="3" height="11" viewBox="0 0 3 11"><path d="M1.500 0v11" stroke="#999" stroke-width="1.500" stroke-dasharray="2 2.500"/></svg>
    <div class="fx">
      <button aria-label="Cancelar"><svg width="12" height="12" viewBox="0 0 12 12"><path d="M1 1l9 9M10 1l-9 9" stroke="#bbb" stroke-width="1.500"/></svg></button>
      <button aria-label="Introducir"><svg width="13" height="12" viewBox="0 0 13 12"><path d="M1 7l3 3 8-9" fill="none" stroke="#bbb" stroke-width="2"/></svg></button>
      <button class="f">f<sub>x</sub></button>
    </div>
    <div class="formula"><textarea aria-label="Barra de fórmulas">2432.3206</textarea><svg width="8" height="6" viewBox="0 0 8 6"><path d="M1 5l3-4 3 4" fill="none" stroke="#555" stroke-width="1.500"/></svg></div>
  </div>
  <div class="sheet">
    <table class="cells">
      <colgroup><col class="rh"><col class="w"><col class="w"><col class="w x"><col class="w"><col class="w"><col class="w x"><col class="e"></colgroup>
      <thead><tr><th><svg width="10" height="10" viewBox="0 0 10 10"><path d="M10 0v10H0z" fill="#d4d4d4"/></svg></th><th>A</th><th>B</th><th>C</th><th>D</th><th class="sel">E</th><th>F</th><th></th></tr></thead>
      <tbody id="cells"></tbody>
    </table>
    <div class="vscroll"><button aria-label="Subir"><svg width="7" height="4" viewBox="0 0 7 4"><path d="M0 4h7L3.500 0z" fill="#666"/></svg></button><div class="thumb"></div><button aria-label="Bajar"><svg width="7" height="4" viewBox="0 0 7 4"><path d="M0 0h7L3.500 4z" fill="#666"/></svg></button></div>
  </div>
  <div class="sheet-tabs">
    <div class="prevnext"><svg width="4" height="7" viewBox="0 0 4 7"><path d="M4 0v7L0 3.500z" fill="#bbb"/></svg><svg width="4" height="7" viewBox="0 0 4 7"><path d="M0 0v7l4-3.500z" fill="#bbb"/></svg></div>
    <button class="hoja">Hoja1</button>
    <button class="add" aria-label="Hoja nueva"><svg width="16" height="16" viewBox="0 0 16 16"><circle cx="8" cy="8" r="7" fill="none" stroke="#777"/><path d="M8 4v8M4 8h8" stroke="#555" stroke-width="1.500"/></svg></button>
    <svg class="hdots" width="3" height="11" viewBox="0 0 3 11"><path d="M1.500 0v11" stroke="#999" stroke-width="1.500" stroke-dasharray="2 2.500"/></svg>
    <div class="hscroll"><button aria-label="Izquierda"><svg width="4" height="7" viewBox="0 0 4 7"><path d="M4 0v7L0 3.500z" fill="#444"/></svg></button><div class="thumb"></div><div class="track"></div><button aria-label="Derecha"><svg width="4" height="7" viewBox="0 0 4 7"><path d="M0 0v7l4-3.500z" fill="#444"/></svg></button></div>
  </div>
  <footer class="xl-status">
    <span>LISTO</span>
    <button class="v on" aria-label="Normal"><svg width="14" height="14" viewBox="0 0 14 14"><path d="M1 1.500h12v11H1zM1 5h12M1 9h12M5 1v12M9 1v12" fill="none" stroke="#fff"/></svg></button>
    <button class="v" aria-label="Diseño de página"><svg width="14" height="14" viewBox="0 0 14 14"><path d="M1 1.500h12v11H1zM4 3.500h6v7H4zM5 5.500h4M5 7.500h4M5 9.500h4" fill="none" stroke="#fff"/></svg></button>
    <button class="v" aria-label="Saltos de página"><svg width="14" height="14" viewBox="0 0 14 14"><path d="M1 1.500h12v11H1z" fill="none" stroke="#fff"/><path d="M1 2h3v5H1zM5 2h4v5H5z" fill="#fff"/></svg></button>
    <button class="z" aria-label="Alejar">−</button>
    <input type="range" min="0" max="100" value="50" aria-label="Zoom">
    <button class="z" aria-label="Acercar">+</button>
    <output>100 %</output>
  </footer>
</section>
</div>
<script src="script.js"></script>
</body>
</html>
```

FILE: styles.css
```css
* { box-sizing: border-box; }
body { margin: 0; background: #000; font: 11px/14px "Open Sans", "Noto Sans", sans-serif; color: #333; }
button, input, textarea { font: inherit; color: inherit; background: none; border: 0; padding: 0; margin: 0; border-radius: 0; outline: 0; }
h1, h2 { margin: 0; font: inherit; }
svg { display: block; flex: none; overflow: visible; }
i { display: inline-block; width: 0; height: 0; border: 4px solid transparent; border-top-color: #444; border-bottom: 0; }

.desktop { display: grid; grid-template-columns: 773fr 507fr; min-height: calc(100vh - 34px); margin: 17px 0; background: linear-gradient(#06264d 0 4px, #1673d6 5px 97%, #0b62cf); }

/* CAD window */
.cad { display: flex; flex-direction: column; min-width: 0; margin: 2px 0 1px 2px; padding: 0 2px 7px 6px; border-top: 1px solid #8fb8ea; border-radius: 6px 6px 4px 4px; background: linear-gradient(#2458a8, #2b66bd 30px, #1b6fd2 170px, #1f8fe8 50%, #37b8f0); box-shadow: inset 1px 0 #6ca5e6; }
.cad-title { display: flex; align-items: flex-end; height: 28px; background: linear-gradient(90deg, #2a5fb3, #2f68bd 70%, #1b5cb3); }
.app-btn { display: flex; align-items: center; justify-content: space-between; width: 38px; height: 21px; padding: 0 4px 0 1px; background: linear-gradient(#d0d0d0, #8e8e8e); }
.qat { display: flex; align-items: center; gap: 5px; height: 21px; width: 70px; padding-left: 7px; background: #9c9c9c; }
.cad-name { flex: 0 1 125px; height: 21px; padding: 0 9px 0 0; text-align: right; font-size: 11px; line-height: 14px; color: #0b1526; background: linear-gradient(90deg, #5f8dc4, #8ba0b6 18%, #5c83b4 34%, #2b69bd 48%, #3f8be0 68%, #9acbf6 88%, #3b86d6); }
.name-arrow { display: grid; place-items: center; width: 13px; height: 21px; background: #8b8b8b; }
.cad-search { flex: 0 1 169px; min-width: 0; height: 19px; padding: 0 3px; background: #f3f3f3; border: 1px solid #777; font-style: italic; }
.cad-search::placeholder { color: #777; opacity: 1; }
.info { display: flex; align-items: center; gap: 10px; flex: 0 1 236px; height: 21px; padding: 0 4px; background: #9b9b9b; color: #f4f4f4; }
.sign { display: flex; align-items: center; gap: 5px; }
.push { margin-left: auto; }
.help { margin-left: 8px; }
.win-ctl { display: flex; align-self: flex-start; margin-left: auto; height: 18px; border: 1px solid #7da4d8; border-top: 0; border-right: 0; border-radius: 0 0 0 5px; }
.win-ctl button { display: grid; place-items: center; width: 26px; border-right: 1px solid #7da4d8; }
.win-ctl button:last-child { width: 38px; border: 0; }

.cad-menu { display: flex; align-items: center; gap: 17px; height: 20px; padding-left: 14px; background: #3b3b3b; color: #f2f2f2; white-space: nowrap; }
.cad-menu svg { margin-left: -5px; }

.ribbon { display: flex; height: 92px; padding: 1px 0 1px 1px; background: linear-gradient(90deg, #b0b0b0, #8a8a8a); }
.panel { display: flex; flex-direction: column; flex: none; border-right: 2px solid #bdbdbd; background: #fcfcfc; }
.w-blocks { width: 128px; } .w-text { width: 129px; } .w-modify { width: 59px; } .w-layout { width: 57px; } .w-draw { width: 96px; } .w-dim { width: 108px; } .w-tools { width: 88px; } .w-web { width: 60px; border-right: 0; }
.tools { display: flex; flex: 1; justify-content: space-evenly; align-items: center; padding-bottom: 2px; }
.big { display: flex; flex-direction: column; align-items: center; gap: 5px; white-space: nowrap; text-align: center; position: relative; }
.drop::after { content: ""; position: absolute; right: -7px; bottom: 10px; border: 2px solid transparent; border-top: 3px solid #333; border-bottom: 0; }
.smalls { display: flex; flex-direction: column; gap: 2px; }
.smalls button { width: 22px; height: 21px; border: 1px solid #d5d5d5; background: #f7f7f7; }
.smalls svg { width: 18px; height: 18px; margin: 0 auto; }
.cap { display: flex; align-items: center; justify-content: center; gap: 6px; height: 16px; background: #ececec; color: #444; }
.g6 { font: 6px "Liberation Sans", sans-serif; } .g9 { font: bold 9px "Liberation Sans", sans-serif; fill: #333; } .g11 { font: 11px "Liberation Sans", sans-serif; } .g11.bold { font-weight: 700; } .g16 { font: bold 16px "Liberation Sans", sans-serif; fill: #444; } .g22 { font: bold 22px "Liberation Sans", sans-serif; fill: #444; }

.doc-tabs { display: flex; align-items: flex-end; height: 33px; padding: 0 0 4px 16px; background: linear-gradient(#ababab, #8d8d8d 29px, #5f5f5f 30px, #777); }
.doc-tab { display: flex; align-items: center; justify-content: space-between; width: 122px; height: 23px; padding: 0 13px 0 14px; background: linear-gradient(#dadada, #a9a9a9); clip-path: polygon(0 100%, 4px 80%, 8px 12%, 13px 0, 107px 0, 113px 12%, 117px 80%, 100% 100%); color: #111; }
.doc-new { padding: 0 0 4px 5px; }

.canvas { position: relative; flex: 1; min-height: 465px; overflow: hidden; border-left: 1px solid #5b5d62; background-color: #202630;
  background-image: repeating-linear-gradient(90deg, #2f3640 0 1px, transparent 1px 57px), repeating-linear-gradient(#2f3640 0 1px, transparent 1px 57px), repeating-linear-gradient(90deg, #222933 0 1px, transparent 1px 11px), repeating-linear-gradient(#222933 0 1px, transparent 1px 11px); background-position: 4px 5px; }
.view-label { position: absolute; left: 4px; top: 6px; color: #e8e9ec; }
.mdi { position: absolute; right: 8px; top: 9px; display: flex; gap: 8px; }
.survey { position: absolute; left: 52px; top: 42px; width: 570px; height: 300px; table-layout: fixed; border-collapse: collapse; font: 16px/17px "Liberation Sans", Arial, sans-serif; color: #bcbfc7; text-align: center; }
.survey th, .survey td { border: 1px solid #aeb2ba; padding: 4px 2px 0 0; font-weight: 400; line-height: 16px; vertical-align: bottom; }
.c1 { width: 92px; } .c2 { width: 91px; } .c3 { width: 80px; } .c4 { width: 102px; } .c5 { width: 96px; } .c6 { width: 109px; }
.summary { position: absolute; left: 69px; top: 362px; font: 16px/17px "Liberation Sans", Arial, sans-serif; color: #b4b7bf; }
.cube { position: absolute; right: 8px; top: 32px; }
.cube text { text-anchor: middle; }
.dir { font: bold 14px "Liberation Sans", sans-serif; fill: #b5b8c0; }
.top { font: bold 9px "Liberation Sans", sans-serif; fill: #444852; }
.wcs { position: absolute; right: 31px; top: 135px; width: 45px; height: 15px; padding: 0 4px; border: 1px solid #ccc; border-radius: 3px; background: #a3a5ac; color: #60636b; font: 10px/13px "Liberation Sans", sans-serif; text-align: left; }
.navbar { position: absolute; right: 2px; top: 174px; display: flex; flex-direction: column; align-items: center; width: 30px; height: 201px; border: 1px solid #777; border-radius: 4px; background: #a6a8ad; }
.navbar hr { width: 24px; margin: 2px 0 4px; border: 0; border-top: 1px solid #75777c; }
.nav-x { align-self: flex-end; margin-bottom: 4px; }
.nav-min { margin: auto 1px 1px auto; }
.ucs { position: absolute; left: 9px; bottom: 6px; }
.cmd { position: absolute; left: 152px; right: 151px; bottom: 1px; display: flex; align-items: center; gap: 4px; height: 25px; padding-right: 3px; background: #b6b7bb; border: 1px solid #55585e; }
.cmd-grip { width: 50px; background: #56585c; }
.cmd input { flex: 1; min-width: 0; font: italic 11px/14px "Liberation Mono", monospace; }
.cmd input::placeholder { color: #74767b; opacity: 1; }

.layout-tabs { display: flex; height: 17px; background: #f0f0f0; color: #111; padding-left: 2px; }
.steps { display: flex; width: 58px; }
.steps button { flex: 1; border: 1px solid #c8c8c8; background: #fafafa; }
.steps svg { width: 100%; height: 13px; }
.model { width: 46px; color: #fff; background: #202630; clip-path: polygon(0 0, 100% 0, 41px 100%, 7px 100%); }
.lay { position: relative; width: 51px; }
.lay::after { content: ""; position: absolute; right: -1px; top: 0; height: 14px; border-right: 1px solid #444; transform: skewX(-24deg); }

.cad-status { display: flex; height: 20px; border-top: 1px solid #333; background: #7c7c7c; color: #111; }
.cad-status output { flex: 1 1 185px; padding: 3px 12px; font: 11px/14px "Liberation Sans", Arial, sans-serif; white-space: nowrap; background: linear-gradient(#8c8c8c, #a4a4a4); }
.cad-status button { flex: 0 1 21px; min-width: 0; display: flex; align-items: center; justify-content: center; border-left: 1px solid #666; background: linear-gradient(#c4c4c4, #a9a9a9); }
.cad-status svg { width: 18px; height: 18px; }
.cad-status .lit { background: linear-gradient(#dff1f8, #a6d3e2); }
.cad-status .txt { flex-basis: 42px; font: 11px "Liberation Sans", sans-serif; }
.cad-status .scale { flex-basis: 48px; gap: 2px; font: 11px "Liberation Sans", sans-serif; }
.cad-status .bulb { flex-basis: 33px; background: linear-gradient(#777, #aaa); }
.cad-status .thin { flex-basis: 11px; }
.cad-status .tri { width: 8px; height: 5px; }
.sep { flex: 0 0 9px; border-left: 1px solid #555; }
.grip { flex: 0 0 12px; background: repeating-linear-gradient(135deg, #7c7c7c 0 3px, #9d9d9d 3px 4px); }

/* Spreadsheet window */
.xl { display: flex; flex-direction: column; min-width: 0; margin: 3px 0 9px; background: #fdfdfd; color: #444; overflow: hidden; }
.xl-title { display: flex; align-items: center; gap: 14px; height: 27px; padding: 0 6px 0 9px; border-left: 1px solid #2f7a55; }
.xl-title h2 { flex: 1; text-align: center; white-space: nowrap; }
.xl-title button { flex: none; }
.xl-ctl { display: flex; align-items: center; gap: 17px; }
.q { font-size: 13px; font-weight: 700; color: #666; }
.xl-tabs { display: flex; height: 23px; border-bottom: 1px solid #d5d5d5; white-space: nowrap; }
.xl-tabs button { flex: none; padding: 0 13px; }
.xl-tabs .file { width: 55px; padding: 0; background: #217346; color: #fff; }
.xl-tabs .on { width: 58px; height: 23px; margin-left: 5px; padding: 0; background: #fdfdfd; border: 1px solid #d5d5d5; border-bottom: 0; color: #217346; }
.xl-tabs .last { padding: 0 0 0 12px; }
.xl-tabs .more { display: grid; place-items: center; width: 9px; padding: 0; border: 1px solid #c5c5c5; margin-left: auto; background: #fdfdfd; }
.xl-ribbon { display: flex; height: 88px; padding: 5px 0 4px; border-bottom: 1px solid #d5d5d5; position: relative; }
.xl i { border-width: 3px; border-top-color: #666; border-bottom: 0; }
.grp { display: flex; flex-direction: column; align-items: center; flex: none; border-right: 1px solid #e0e0e0; white-space: nowrap; }
.grp b { display: grid; place-items: center; width: 28px; height: 28px; margin-bottom: 5px; border: 1px solid #c8c8c8; background: #fdfdfd; font-weight: 400; font-size: 13px; }
.grp > i { margin-top: 5px; }
.xa { font: bold 12px "Open Sans", sans-serif; fill: #444; }
.g1 { width: 70px; } .g2 { width: 42px; } .g3 { width: 59px; } .g4 { width: 48px; } .g6w { width: 41px; } .g7 { width: 55px; }
.g5 { flex: 0 1 163px; align-items: flex-start; padding: 0 0 0 6px; }
.g5 button { display: flex; align-items: center; gap: 2px; height: 21px; }
.g5 button i { margin-left: 2px; }
.g5 small { align-self: center; margin: auto 0 0; font-size: 10px; color: #666; }
.fold { position: absolute; right: 6px; bottom: 4px; }
.fbar { display: flex; align-items: flex-start; height: 82px; padding: 10px 1px 0 4px; color: #333; font-size: 12px; }
.namebox { display: flex; align-items: center; width: 97px; height: 25px; padding: 0 6px; border: 1px solid #c8c8c8; }
.namebox input { flex: 1; min-width: 0; }
.dots { margin: 7px 13px 0 12px; }
.fx { display: flex; align-items: center; justify-content: space-around; width: 104px; height: 25px; border: 1px solid #c8c8c8; }
.f { font: italic 14px "Liberation Serif", serif; color: #333; }
.f sub { font-size: 10px; }
.formula { display: flex; flex: 1; margin-left: 3px; height: 62px; padding: 4px 4px 0 10px; border: 1px solid #c8c8c8; }
.formula textarea { flex: 1; min-width: 0; height: 50px; resize: none; line-height: 16px; overflow: hidden; }
.formula svg { margin-top: 4px; }

.sheet { display: flex; flex: 1 1 0; min-height: 0; overflow: hidden; justify-content: space-between; }
.cells { width: 489px; height: 414px; table-layout: fixed; border-collapse: collapse; border-right: 1px solid #a5a5a5; font-size: 12px; color: #222; }
.rh { width: 24px; } .w { width: 75px; } .w.x { width: 76px; } .e { width: 13px; }
.cells th { padding: 0; font-weight: 400; color: #555; line-height: 15px; }
.cells thead th { height: 18px; border-right: 1px solid #e0e0e0; border-bottom: 1px solid #a5a5a5; }
.cells thead svg { margin-left: auto; margin-right: 2px; }
.cells thead .sel { background: #dcdcdc; color: #217346; font-weight: 700; border-bottom: 2px solid #217346; }
.cells tbody th { border-right: 1px solid #a5a5a5; border-bottom: 1px solid #e4e4e4; }
.cells tbody .sel { background: #e1e1e1; color: #217346; font-weight: 700; box-shadow: inset -2px 0 #217346; }
.cells td { padding: 0 2px; line-height: 15px; border-right: 1px solid #d6d6d6; border-bottom: 1px solid #d6d6d6; white-space: nowrap; }
.cells .n { text-align: right; }
.cells .cur { position: relative; outline: 2px solid #217346; outline-offset: -1px; }
.cur::after { content: ""; position: absolute; right: -2px; bottom: -2px; width: 5px; height: 5px; background: #217346; border: 1px solid #fff; border-width: 1px 0 0 1px; }
.vscroll { display: flex; flex-direction: column; width: 14px; margin-top: 2px; background: #ececec; }
.vscroll button, .hscroll button { display: grid; place-items: center; flex: none; width: 14px; height: 14px; border: 1px solid #b5b5b5; background: #fff; }
.vscroll .thumb { flex: 1; margin-bottom: 20px; border: 1px solid #b5b5b5; background: #fff; }
.sheet-tabs { display: flex; align-items: center; height: 26px; padding-right: 17px; background: #f2f2f2; border-top: 1px solid #bdbdbd; }
.prevnext { display: flex; justify-content: center; gap: 23px; flex: 0 0 93px; padding-right: 12px; }
.hoja { width: 57px; height: 24px; margin-top: -2px; background: #fff; border: 1px solid #bdbdbd; border-top: 0; border-bottom: 2px solid #217346; color: #217346; font-weight: 700; font-size: 12px; }
.add { margin-left: 31px; }
.hdots { margin-left: auto; margin-right: 14px; }
.hscroll { display: flex; flex: 0 1 168px; background: #e6e6e6; }
.hscroll .thumb { flex: 104; border: 1px solid #b5b5b5; border-left: 0; background: #fff; }
.hscroll .track { flex: 36; }
.xl-status { display: flex; align-items: center; height: 21px; padding: 0 15px 0 6px; background: #217346; color: #fff; }
.xl-status span { flex: 1; }
.v { display: grid; place-items: center; width: 36px; height: 21px; }
.v.on { background: #195c37; }
.z { width: 13px; font-size: 16px; line-height: 16px; font-weight: 700; }
.xl-status input { appearance: none; width: 94px; height: 12px; background: linear-gradient(#fff, #fff) center / 100% 1px no-repeat; }
.xl-status input::-webkit-slider-thumb { appearance: none; width: 4px; height: 11px; background: #fff; }
.xl-status output { margin-left: 12px; }
```

FILE: script.js
```js
const points = [
  ["P1", "P1 - P2", "1018.03", "76°43'57\"", "2796.2906", "2406.6210"],
  ["P2", "P2 - P3", "1232.14", "81°13'47\"", "1839.5694", "2058.6760"],
  ["P3", "P3 - P4", "1822.52", "108°34'48\"", "2432.3206", "978.4884"],
  ["P4", "P4 - P5", "786.60", "63°11'47\"", "4226.1729", "1300.4674"],
  ["P5", "P5 - P6", "446.62", "216°58'45\"", "3753.0119", "1928.8458"],
  ["P6", "P6 - P7", "358.77", "90°0'0\"", "3753.0119", "2375.4618"],
  ["P7", "P7 - P8", "195.04", "131°47'43\"", "3394.2414", "2375.4618"],
  ["P8", "P8 - P9", "384.72", "209°18'6\"", "3264.2521", "2230.0519"],
  ["P9", "P9 - P10", "305.60", "144°14'51\"", "2900.2821", "2105.4149"],
  ["P10", "P10 - P11", "280.43", "324°39'20\"", "2723.4966", "1856.1408"],
  ["P11", "P11 - P12", "199.90", "204°35'37\"", "2723.4966", "2136.5741"],
  ["P12", "P12 - P1", "88.89", "148°41'18\"", "2806.6898", "2318.3365"]
];

document.getElementById("survey").innerHTML = points
  .map(row => "<tr>" + row.map(v => "<td>" + v + "</td>").join("") + "</tr>")
  .join("");

const rows = [["V", "L", "D", "ANG", "X", "Y"], ...points];
const numeric = [2, 4, 5];
let html = "";
for (let r = 0; r < 21; r++) {
  html += "<tr><th" + (r === 3 ? ' class="sel"' : "") + ">" + (r + 1) + "</th>";
  for (let c = 0; c < 7; c++) {
    const value = rows[r] && rows[r][c] || "";
    const classes = [];
    if (r > 0 && numeric.includes(c)) classes.push("n");
    if (r === 3 && c === 4) classes.push("cur");
    html += '<td class="' + classes.join(" ") + '">' + value + "</td>";
  }
  html += "</tr>";
}
document.getElementById("cells").innerHTML = html;
```
